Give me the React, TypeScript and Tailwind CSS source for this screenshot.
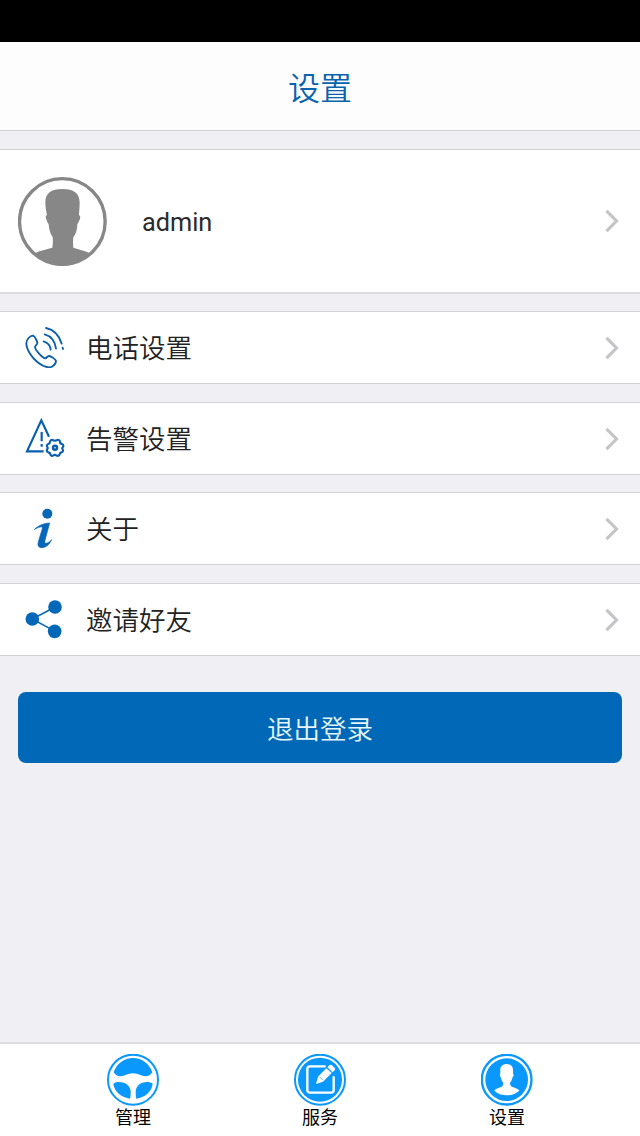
import type { ReactNode } from "react";

function AvatarIcon() {
  return (
    <svg className="w-[89px] h-[89px] text-[#878787]" viewBox="54 51 267 267" fill="currentColor">
      <circle cx="187" cy="184.500" r="128.500" fill="none" stroke="currentColor" strokeWidth="10" />
      <path d="M187 87c34 0 52 12 52 41 0 15-2 29-2 38 6 1 4 12-1 19-2 5-3 5-4 8 0 13-3 28-12 39-1 9-1 19 0 31 16 6 34 9 49 16-19 24-49 39-82 39s-64-15-82-39c15-7 33-10 52-16 2-12 2-23 1-32-8-10-11-25-12-38-2-4-4-5-5-10-4-8-6-17 0-17-2-12-5-24-5-39 0-27 17-40 51-40z" />
    </svg>
  );
}

function PhoneIcon() {
  return (
    <svg
      className="w-[41px] h-[41px] text-[#0b5ea8]"
      viewBox="42 36 123 123"
      fill="none"
      stroke="currentColor"
      strokeWidth="5.500"
      strokeLinecap="round"
      strokeLinejoin="round"
    >
      <path d="M69 62c-10 1-19 10-20 23 0 18 16 42 33 56 17 13 35 20 46 13 6-4 10-11 10-16-1-5-15-15-21-15-5 0-7 6-11 7-8-1-30-24-31-34 1-5 7-7 7-12-1-7-7-20-13-22z" />
      <path d="M108 39c23 5 40 23 47 47M158 98l1 4" />
      <path d="M104 58c18 5 31 20 34 43" />
      <path d="M101 79c12 4 20 13 21 25" />
    </svg>
  );
}

function AlarmIcon() {
  return (
    <svg className="w-[41px] h-[41px] text-[#0b5fae]" viewBox="42 54 123 123" fill="none" stroke="currentColor">
      <path d="M101 154H51L94 61l23 49" strokeWidth="6.500" />
      <path d="M95 96v28M95 132v8" strokeWidth="6.500" />
      <path
        d="M128 120q7 4 14 0c3-2 8 1 8 5 0 3 2 6 6 7 5 2 5 7 2 10-2 2-2 4 0 6 3 4 0 8-4 9-3 1-5 3-5 6-2 5-6 6-10 3-3-2-6-2-9 0-4 3-8 1-9-3 0-3-2-5-6-6-5-2-6-6-3-10 2-2 2-4 0-6-3-4-1-8 3-9 3-1 5-4 5-7 1-4 5-7 8-5z"
        strokeWidth="6.500"
      />
      <circle cx="135" cy="143" r="6" strokeWidth="7.500" />
    </svg>
  );
}

function InfoIcon() {
  return (
    <svg className="w-[41px] h-[41px] text-[#0567b8]" viewBox="42 54 123 123" fill="currentColor">
      <circle cx="112" cy="71" r="15" />
      <path
        d="M73 119c10-11 28-20 46-20l-14 52c-1 7 0 10 4 9 7-2 11-6 16-11-6 13-17 24-29 24-11 0-14-7-11-18l11-36c2-8 1-10-5-8-7 1-12 4-18 8z"
        stroke="currentColor"
        strokeWidth="2"
      />
    </svg>
  );
}

function ShareIcon() {
  return (
    <svg className="w-[41px] h-[41px] text-[#0567b8]" viewBox="42 72 123 123" fill="currentColor">
      <path d="M135 96L67 132l68 37" fill="none" stroke="currentColor" strokeWidth="4.500" />
      <circle cx="67" cy="132" r="20.500" />
      <circle cx="135" cy="96" r="20.500" />
      <circle cx="134" cy="169" r="20.500" />
    </svg>
  );
}

function Chevron() {
  return (
    <svg
      className="w-[14px] h-[24px] shrink-0 text-[#c5c5c8]"
      viewBox="0 0 14 24"
      fill="none"
      stroke="currentColor"
      strokeWidth="3.200"
    >
      <path d="M1.500 1.800L11.500 12 1.500 22.200" />
    </svg>
  );
}

function WheelIcon() {
  return (
    <svg className="w-[52px] h-[52px] text-[#0a98fc]" viewBox="51 57 156 156" fill="currentColor">
      <circle cx="129" cy="134" r="75" fill="none" stroke="currentColor" strokeWidth="6" />
      <path d="M71 112c8-26 32-43 58-43s50 17 58 43c-5 8-12 12-20 12-14 0-20-9-38-9s-24 9-38 9c-8 0-15-4-20-12z" />
      <path d="M70 147c4-4 10-6 17-6 20 0 35 12 35 30 0 7 0 14-2 20-25-3-46-19-50-44z" />
      <path d="M188 147c-4-4-10-6-17-6-20 0-34 12-34 30 0 7 0 14 2 20 25-3 45-19 49-44z" />
    </svg>
  );
}

function EditIcon() {
  return (
    <svg className="w-[52px] h-[52px] text-[#0a98fc]" viewBox="42 57 156 156" fill="currentColor">
      <circle cx="120" cy="134" r="75" fill="none" stroke="currentColor" strokeWidth="6" />
      <circle cx="120" cy="134" r="66" />
      <path
        d="M137 94H90q-8 0-8 8v63q0 8 8 8h63q8 0 8-8v-41"
        fill="none"
        stroke="#fff"
        strokeWidth="7"
      />
      <path d="M108 147l6-22 25-25 16 14-26 26z" fill="#fff" />
      <path d="M142 97l6-6c3-3 6-2 8 0l8 8c2 2 2 5 0 7l-6 6z" fill="#fff" />
      <path d="M119 126l9 9" stroke="currentColor" strokeWidth="2" />
    </svg>
  );
}

function UserIcon() {
  return (
    <svg className="w-[52px] h-[52px] text-[#0a98fc]" viewBox="48 57 156 156" fill="currentColor">
      <circle cx="125" cy="134" r="74.500" fill="none" stroke="currentColor" strokeWidth="7" />
      <circle cx="125" cy="134" r="64" />
      <path
        d="M125 87c13 0 20 8 19 21v8c3 1 2 8-2 12-1 7-4 11-7 15 0 9 3 11 10 14 8 3 15 5 18 10-10 9-23 14-38 14s-27-5-37-14c3-5 10-7 18-10 7-3 9-6 9-14-4-4-6-9-7-15-4-4-5-11-2-12v-8c-1-13 6-21 19-21z"
        fill="#fff"
      />
    </svg>
  );
}

function Row({ icon, label }: { icon: ReactNode; label: string }) {
  return (
    <a
      href="#"
      className="flex h-[73px] items-center border-y border-[#d3d3d6] bg-white pl-6 pr-[21px]"
    >
      {icon}
      <span className="ml-[21px] flex-1 pt-[3px] text-[26.5px] font-[350] leading-none text-[#222]">{label}</span>
      <Chevron />
    </a>
  );
}

const tabs = [
  { label: "管理", icon: <WheelIcon /> },
  { label: "服务", icon: <EditIcon /> },
  { label: "设置", icon: <UserIcon /> },
];

export default function App() {
  return (
    <div className="flex h-[1136px] w-[640px] flex-col overflow-hidden bg-[#efeff4] font-['Roboto','Noto_Sans_CJK_SC',sans-serif]">
      <div className="h-[42px] shrink-0 bg-black" />
      <header className="flex h-[89px] shrink-0 items-center justify-center border-b border-[#d0d0d2] bg-[#fdfdfd] pt-[5px]">
        <h1 className="text-[32px] font-[350] leading-none text-[#0963ad]">设置</h1>
      </header>

      <main className="flex-1 pt-[18px]">
        <a
          href="#"
          className="flex h-[145px] items-center border-t border-b-2 border-t-[#d0d0d3] border-b-[#dcdcdf] bg-white pl-[18px] pr-[21px]"
        >
          <AvatarIcon />
          <span className="ml-[35px] flex-1 pt-[3px] text-[25.3px] leading-none text-[#2b2b2b]">admin</span>
          <Chevron />
        </a>
        <div className="mt-[17px]">
          <Row icon={<PhoneIcon />} label="电话设置" />
        </div>
        <div className="mt-[18px]">
          <Row icon={<AlarmIcon />} label="告警设置" />
        </div>
        <div className="mt-[17px]">
          <Row icon={<InfoIcon />} label="关于" />
        </div>
        <div className="mt-[18px]">
          <Row icon={<ShareIcon />} label="邀请好友" />
        </div>
        <div className="mt-9 px-[18px]">
          <button className="h-[71px] w-full rounded-lg bg-[#0068b7] pt-[5px] text-[26.5px] font-[350] leading-none text-[#e6f6fb]">
            退出登录
          </button>
        </div>
      </main>

      <nav className="flex h-[94px] shrink-0 justify-center border-t-2 border-[#dedee0] bg-white pt-[10px]">
        {tabs.map((tab) => (
          <a key={tab.label} href="#" className="flex w-[187px] flex-col items-center">
            {tab.icon}
            <span className="mt-[3px] text-[18px] leading-none text-black">{tab.label}</span>
          </a>
        ))}
      </nav>
    </div>
  );
}
